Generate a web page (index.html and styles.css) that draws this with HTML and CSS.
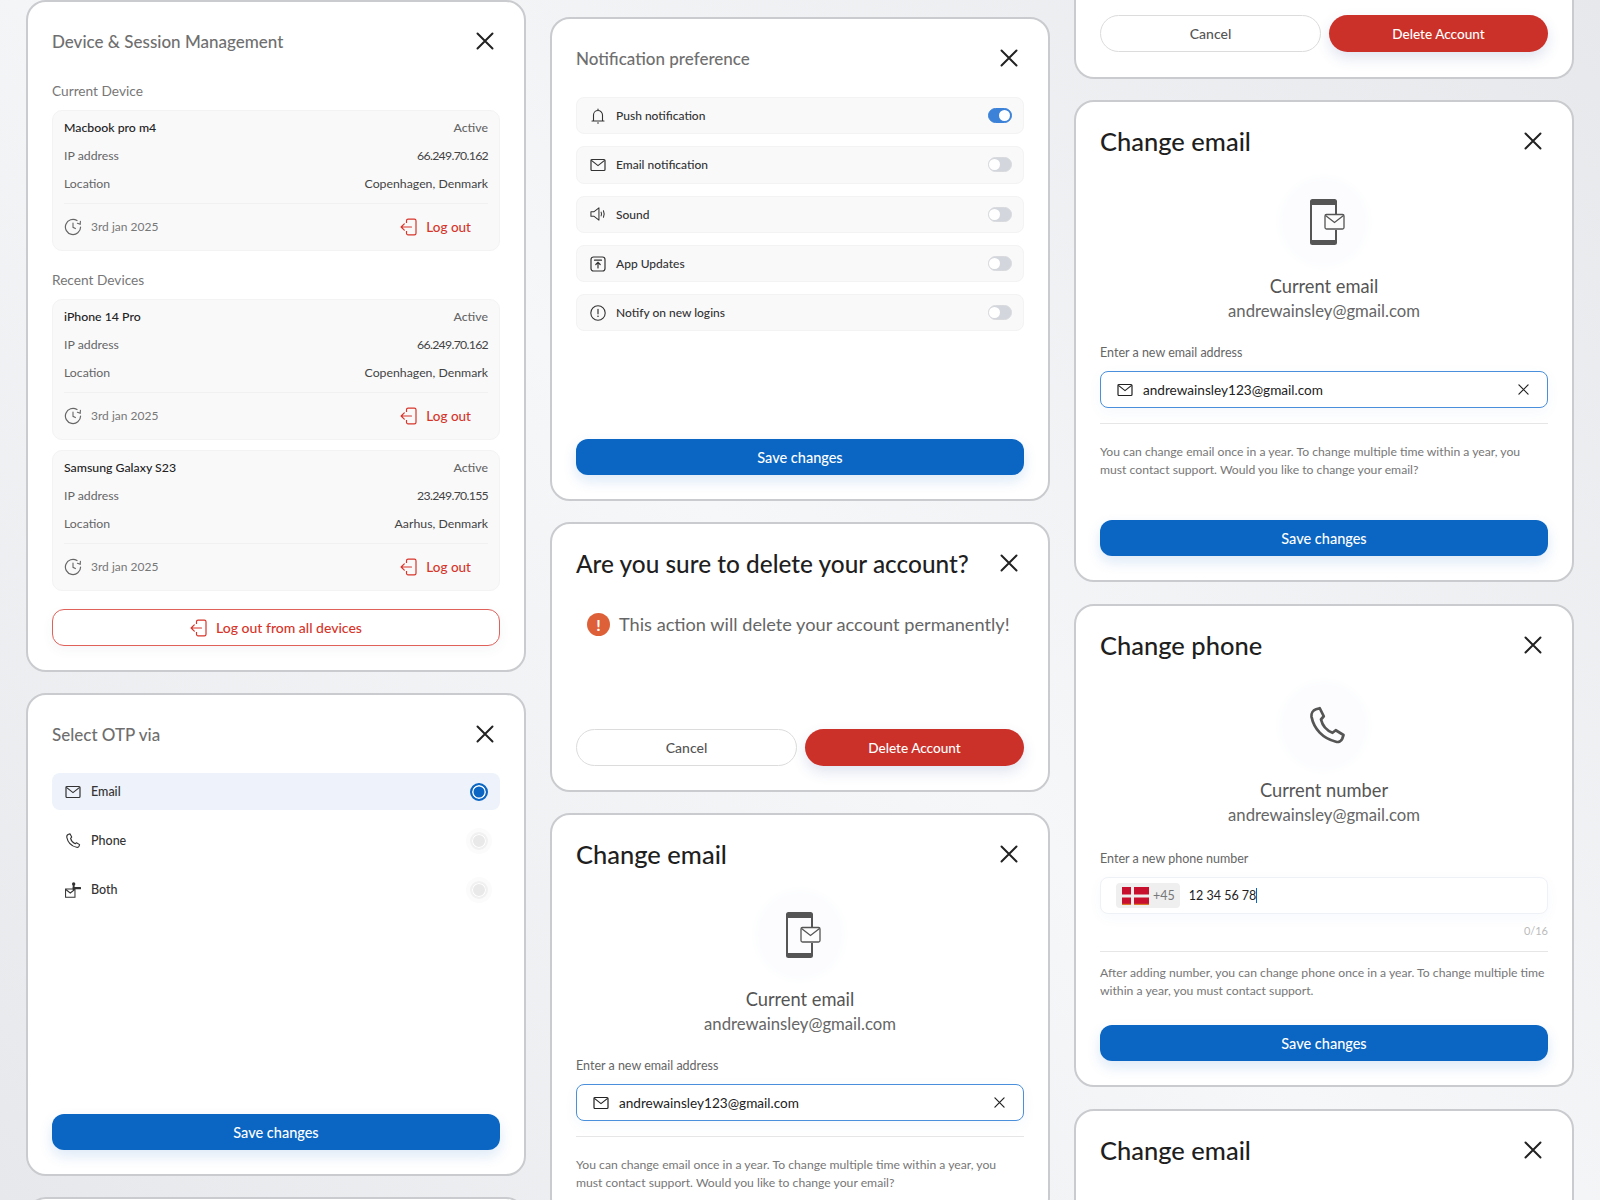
FILE: index.html
```html
<!DOCTYPE html>
<html lang="en">
<head>
    <meta charset="UTF-8">
    <title>Account settings dialogs</title>
    <link rel="stylesheet" href="styles.css">
</head>
<body>

<svg class="sprite" width="0" height="0">
    <symbol id="i-close" viewBox="0 0 18 18"><path d="M1.5 1.5l15 15M16.5 1.5l-15 15" fill="none" stroke="currentColor" stroke-width="2" stroke-linecap="round"/></symbol>
    <symbol id="i-mail" viewBox="0 0 16 14"><rect x="1" y="1.5" width="14" height="11" rx="1" fill="none" stroke="currentColor" stroke-width="1.2"/><path d="M1.4 2.4L8 7.6l6.6-5.2" fill="none" stroke="currentColor" stroke-width="1.2"/></symbol>
    <symbol id="i-phone" viewBox="0 0 16 16"><path d="M3.6 1.3l1.5-.4 1.6 3.2-1.1 1.3c.6 2.500 2.300 4.400 4.600 5.300l1.300-1 3.100 1.900-.5 1.500c-.4 1-1.500 1.500-2.500 1.200C6.300 13 2.800 9.200 1.800 4.300c-.2-1.300.6-2.600 1.800-3z" fill="none" stroke="currentColor" stroke-width="1.100" stroke-linejoin="round"/></symbol>
    <symbol id="i-both" viewBox="0 0 17 17"><path d="M.6 7.500h10v8.800H.6z" fill="none" stroke="currentColor" stroke-width="1.100"/><path d="M.8 8l4.800 3.700L10.400 8" fill="none" stroke="currentColor" stroke-width="1.100"/><circle cx="9.200" cy="2" r="1.800" fill="currentColor"/><path d="M9.200 3v5.500" stroke="currentColor" stroke-width="2"/><path d="M9.200 6.500h7" stroke="currentColor" stroke-width="2.400" stroke-linecap="round"/></symbol>
    <symbol id="i-logout" viewBox="0 0 18 18"><path d="M6.500 5V2.800c0-.9.700-1.600 1.600-1.600h6.300c.9 0 1.600.7 1.600 1.600v12.400c0 .9-.7 1.600-1.600 1.600H8.100c-.9 0-1.600-.7-1.600-1.600V13" fill="none" stroke="currentColor" stroke-width="1.200"/><path d="M11.500 9H1.200M4.300 5.800L1.100 9l3.200 3.200" fill="none" stroke="currentColor" stroke-width="1.200" stroke-linecap="round" stroke-linejoin="round"/></symbol>
    <symbol id="i-clock" viewBox="0 0 18 18"><path d="M16.600 9A7.600 7.600 0 1 1 13 2.500" fill="none" stroke="currentColor" stroke-width="1.200" stroke-linecap="round"/><path d="M9 5v4.300l2.400 1.300" fill="none" stroke="currentColor" stroke-width="1.100" stroke-linecap="round"/><path d="M16.400 3.300l-.2 3-2.800-1" fill="none" stroke="currentColor" stroke-width="1.100" stroke-linecap="round"/></symbol>
    <symbol id="i-bell" viewBox="0 0 16 16"><path d="M3.500 13V7a4.500 4.500 0 0 1 9 0v6M2 13h12M8 1v1.300" fill="none" stroke="currentColor" stroke-width="1.100" stroke-linecap="round"/><circle cx="8" cy="15" r=".8" fill="currentColor"/></symbol>
    <symbol id="i-sound" viewBox="0 0 17 16"><path d="M1 5.700h3L9.500 1.500v13L4 10.300H1z" fill="none" stroke="currentColor" stroke-width="1.100" stroke-linejoin="round"/><path d="M11.800 6c.6 1.300.6 2.700 0 4M14.300 4.500c1 2.300 1 4.700 0 7" fill="none" stroke="currentColor" stroke-width="1.100" stroke-linecap="round"/></symbol>
    <symbol id="i-update" viewBox="0 0 16 16"><rect x="1" y="1" width="14" height="14" rx="2.500" fill="none" stroke="currentColor" stroke-width="1.200"/><path d="M4.500 4.200h7M8 12V6.500M5.800 8.500L8 6.300l2.200 2.200" fill="none" stroke="currentColor" stroke-width="1.200" stroke-linecap="round"/></symbol>
    <symbol id="i-alert" viewBox="0 0 16 16"><circle cx="8" cy="8" r="7.200" fill="none" stroke="currentColor" stroke-width="1.100"/><path d="M8 4.400v4.400" stroke="currentColor" stroke-width="1.200" stroke-linecap="round"/><circle cx="8" cy="11.300" r=".8" fill="currentColor"/></symbol>
    <symbol id="i-device-mail" viewBox="0 0 36 46"><path d="M3.500 0h22A2.500 2.500 0 0 1 28 2.500V6H1V2.500A2.500 2.500 0 0 1 3.500 0zM1 41h27v2.500a2.500 2.500 0 0 1-2.500 2.500h-22A2.500 2.500 0 0 1 1 43.500z" fill="currentColor"/><path d="M2 3v40M27 6v9M27 31v10" stroke="currentColor" stroke-width="2"/><rect x="16" y="15.500" width="19" height="14.500" rx="1.500" fill="#fcfcfd" stroke="currentColor" stroke-width="1.300"/><path d="M16.500 16.500l9 7 9-7" fill="none" stroke="currentColor" stroke-width="1.300"/></symbol>
</svg>

<div class="board">

    <div class="col col-left">
        <section class="card">
            <div class="head">
                <h2 class="title-muted">Device &amp; Session Management</h2>
                <svg class="close"><use href="#i-close"/></svg>
            </div>

            <p class="group-label first">Current Device</p>
            <div class="device">
                <div class="line"><b>Macbook pro m4</b><em>Active</em></div>
                <div class="line"><span>IP address</span><i class="ip">66.249.70.162</i></div>
                <div class="line"><span>Location</span><i>Copenhagen, Denmark</i></div>
                <div class="foot">
                    <svg class="ico-clock"><use href="#i-clock"/></svg><span class="date">3rd jan 2025</span>
                    <a class="logout"><svg class="ico-logout"><use href="#i-logout"/></svg>Log out</a>
                </div>
            </div>

            <p class="group-label">Recent Devices</p>
            <div class="device">
                <div class="line"><b>iPhone 14 Pro</b><em>Active</em></div>
                <div class="line"><span>IP address</span><i class="ip">66.249.70.162</i></div>
                <div class="line"><span>Location</span><i>Copenhagen, Denmark</i></div>
                <div class="foot">
                    <svg class="ico-clock"><use href="#i-clock"/></svg><span class="date">3rd jan 2025</span>
                    <a class="logout"><svg class="ico-logout"><use href="#i-logout"/></svg>Log out</a>
                </div>
            </div>
            <div class="device next">
                <div class="line"><b>Samsung Galaxy S23</b><em>Active</em></div>
                <div class="line"><span>IP address</span><i class="ip">23.249.70.155</i></div>
                <div class="line"><span>Location</span><i>Aarhus, Denmark</i></div>
                <div class="foot">
                    <svg class="ico-clock"><use href="#i-clock"/></svg><span class="date">3rd jan 2025</span>
                    <a class="logout"><svg class="ico-logout"><use href="#i-logout"/></svg>Log out</a>
                </div>
            </div>

            <button class="btn-outline-red"><svg class="ico-logout"><use href="#i-logout"/></svg>Log out from all devices</button>
        </section>

        <section class="card tall">
            <div class="head">
                <h2 class="title-muted">Select OTP via</h2>
                <svg class="close"><use href="#i-close"/></svg>
            </div>
            <div class="options">
                <div class="option selected">
                    <svg class="ico"><use href="#i-mail"/></svg><span>Email</span><span class="radio on"></span>
                </div>
                <div class="option">
                    <svg class="ico"><use href="#i-phone"/></svg><span>Phone</span><span class="radio"></span>
                </div>
                <div class="option">
                    <svg class="ico"><use href="#i-both"/></svg><span>Both</span><span class="radio"></span>
                </div>
            </div>
            <button class="btn-save push">Save changes</button>
        </section>

        <section class="card stub"></section>
    </div>

    <div class="col col-mid">
        <section class="card tall notif">
            <div class="head">
                <h2 class="title-muted">Notification preference</h2>
                <svg class="close"><use href="#i-close"/></svg>
            </div>
            <div class="prefs">
                <div class="pref"><svg class="ico"><use href="#i-bell"/></svg><span>Push notification</span><span class="toggle on"></span></div>
                <div class="pref"><svg class="ico"><use href="#i-mail"/></svg><span>Email notification</span><span class="toggle"></span></div>
                <div class="pref"><svg class="ico"><use href="#i-sound"/></svg><span>Sound</span><span class="toggle"></span></div>
                <div class="pref"><svg class="ico"><use href="#i-update"/></svg><span>App Updates</span><span class="toggle"></span></div>
                <div class="pref"><svg class="ico"><use href="#i-alert"/></svg><span>Notify on new logins</span><span class="toggle"></span></div>
            </div>
            <button class="btn-save push">Save changes</button>
        </section>

        <section class="card card-delete">
            <div class="head">
                <h2 class="title-big title-long">Are you sure to delete your account?</h2>
                <svg class="close"><use href="#i-close"/></svg>
            </div>
            <div class="warning">
                <span class="warning-dot">!</span>
                <p>This action will delete your account permanently!</p>
            </div>
            <div class="actions push">
                <button class="btn-cancel">Cancel</button>
                <button class="btn-delete">Delete Account</button>
            </div>
        </section>

        <section class="card">
            <div class="head">
                <h2 class="title-big">Change email</h2>
                <svg class="close"><use href="#i-close"/></svg>
            </div>
            <div class="badge"><svg class="ico-device"><use href="#i-device-mail"/></svg></div>
            <p class="current">Current email</p>
            <p class="current-value">andrewainsley@gmail.com</p>
            <label class="field-label">Enter a new email address</label>
            <div class="input focus">
                <svg class="ico-mail"><use href="#i-mail"/></svg>
                <span class="input-text">andrewainsley123@gmail.com</span>
                <svg class="ico-clear"><use href="#i-close"/></svg>
            </div>
            <hr class="rule">
            <p class="note">You can change email once in a year. To change multiple time within a year, you must contact support. Would you like to change your email?</p>
        </section>
    </div>

    <div class="col">
        <section class="card cut">
            <div class="actions">
                <button class="btn-cancel">Cancel</button>
                <button class="btn-delete">Delete Account</button>
            </div>
        </section>

        <section class="card">
            <div class="head">
                <h2 class="title-big">Change email</h2>
                <svg class="close"><use href="#i-close"/></svg>
            </div>
            <div class="badge"><svg class="ico-device"><use href="#i-device-mail"/></svg></div>
            <p class="current">Current email</p>
            <p class="current-value">andrewainsley@gmail.com</p>
            <label class="field-label">Enter a new email address</label>
            <div class="input focus">
                <svg class="ico-mail"><use href="#i-mail"/></svg>
                <span class="input-text">andrewainsley123@gmail.com</span>
                <svg class="ico-clear"><use href="#i-close"/></svg>
            </div>
            <hr class="rule">
            <p class="note">You can change email once in a year. To change multiple time within a year, you must contact support. Would you like to change your email?</p>
            <button class="btn-save save-email">Save changes</button>
        </section>

        <section class="card">
            <div class="head">
                <h2 class="title-big">Change phone</h2>
                <svg class="close"><use href="#i-close"/></svg>
            </div>
            <div class="badge"><svg class="ico-handset"><use href="#i-phone"/></svg></div>
            <p class="current">Current number</p>
            <p class="current-value">andrewainsley@gmail.com</p>
            <label class="field-label phone-label">Enter a new phone number</label>
            <div class="input phone">
                <span class="dial">
                    <svg class="flag" viewBox="0 0 27 18"><rect width="27" height="18" fill="#c8102e"/><rect y="16.800" width="27" height="1.200" fill="#d9792a"/><rect x="9" width="3" height="18" fill="#eeeeee"/><rect y="7.500" width="27" height="3" fill="#eeeeee"/></svg>
                    <span class="dial-code">+45</span>
                </span>
                <span class="input-text phone-number">12 34 56 78</span><span class="caret"></span>
            </div>
            <p class="counter">0/16</p>
            <hr class="rule rule-phone">
            <p class="note note-phone">After adding number, you can change phone once in a year. To change multiple time within a year, you must contact support.</p>
            <button class="btn-save save-phone">Save changes</button>
        </section>

        <section class="card stub">
            <div class="head">
                <h2 class="title-big">Change email</h2>
                <svg class="close"><use href="#i-close"/></svg>
            </div>
        </section>
    </div>

</div>

</body>
</html>
```

FILE: styles.css
```css
* {
    box-sizing: border-box;
}
html, body {
    margin: 0;
    height: 1200px;
    overflow: hidden;
}
body {
    font-family: Lato, "Noto Sans", sans-serif;
    color: #222;
    background: linear-gradient(45deg, #e6e8eb 0%, #f6f7f9 50%, #e6e8eb 100%);
}
h2, p {
    margin: 0;
    font-weight: 400;
}
i, em {
    font-style: normal;
}
button {
    font-family: inherit;
    cursor: pointer;
}
.sprite {
    position: absolute;
}

.board {
    display: flex;
    gap: 24px;
    padding-left: 26px;
    height: 1200px;
    overflow: hidden;
}
.col {
    width: 500px;
    flex: none;
    display: flex;
    flex-direction: column;
    gap: 22px;
}
.col-left {
    gap: 21px;
}
.col-mid {
    gap: 21px;
    padding-top: 17px;
}

.card {
    flex: none;
    display: flex;
    flex-direction: column;
    padding: 0 24px 24px;
    background: #fff;
    border: 2px solid #c9cbce;
    border-radius: 20px;
}
.card.tall {
    height: 483px;
}
.card.notif {
    height: 484px;
}
.card.cut {
    height: 79px;
    margin-bottom: -1px;
    padding-top: 15px;
    border-top: none;
    border-radius: 0 0 20px 20px;
}
.card.stub {
    height: 200px;
}
.card-delete {
    height: 270px;
}
.push {
    margin-top: auto;
}

.head {
    display: flex;
    align-items: center;
    justify-content: space-between;
    height: 28px;
    margin-top: 25px;
    flex: none;
}
.title-muted {
    font-size: 17px;
    font-weight: 500;
    color: #6f6f6f;
}
.title-big {
    font-size: 25.5px;
    font-weight: 500;
    color: #1f1f1f;
    white-space: nowrap;
}
.title-long {
    font-size: 24.4px;
}
.close {
    width: 18px;
    height: 18px;
    margin-right: 6px;
    color: #222;
    flex: none;
}

/* device list */
.group-label {
    height: 18px;
    margin: 20px 0 10px;
    font-size: 13.700px;
    line-height: 18px;
    color: #777;
}
.group-label.first {
    margin-top: 27px;
}
.device {
    height: 141px;
    padding: 7px 11px 11px;
    background: #f9f9fa;
    border: 1px solid #f3f3f4;
    border-radius: 10px;
}
.device.next {
    margin-top: 10px;
}
.line {
    display: flex;
    justify-content: space-between;
    height: 20px;
    margin-bottom: 8px;
    font-size: 12.300px;
    line-height: 20px;
    color: #666;
}
.line b {
    font-weight: 500;
    color: #222;
}
.line em {
    font-weight: 500;
    color: #666;
}
.line i {
    color: #444;
}
.line .ip {
    letter-spacing: -0.7px;
}
.foot {
    display: flex;
    align-items: center;
    height: 36px;
    margin-top: 9px;
    padding-top: 10px;
    border-top: 1px solid #f1f1f2;
    font-size: 12px;
    color: #777;
}
.ico-clock {
    width: 18px;
    height: 18px;
    margin-right: 9px;
    color: #666;
}
.logout {
    display: flex;
    align-items: center;
    gap: 8px;
    margin-left: auto;
    margin-right: 17px;
    font-size: 13.500px;
    font-weight: 500;
    color: #d6352a;
}
.ico-logout {
    width: 18px;
    height: 18px;
}
.btn-outline-red {
    display: flex;
    align-items: center;
    justify-content: center;
    gap: 8px;
    height: 37px;
    margin-top: 18px;
    background: #fff;
    border: 1px solid #e0605a;
    border-radius: 12px;
    font-size: 14px;
    font-weight: 500;
    color: #d6352a;
    box-shadow: 0 4px 12px rgba(60, 80, 120, 0.05);
}

/* otp options */
.options {
    display: flex;
    flex-direction: column;
    gap: 12px;
    margin-top: 25px;
}
.option {
    display: flex;
    align-items: center;
    height: 37px;
    padding: 0 12px 0 13px;
    border-radius: 8px;
    font-size: 12.500px;
    font-weight: 500;
    color: #333;
}
.option.selected {
    background: #edf2fb;
}
.ico {
    width: 16px;
    height: 16px;
    margin-right: 10px;
    color: #333;
    flex: none;
}
.radio {
    width: 18px;
    height: 18px;
    margin-left: auto;
    border: 2px solid #f1f1f2;
    border-radius: 50%;
    background: #e9e9ea;
    box-shadow: inset 0 0 0 1px #fff, 0 0 0 4px #fbfbfc;
}
.radio.on {
    border-color: #0b66c3;
    background: #0b66c3;
    box-shadow: inset 0 0 0 1.5px #fff;
}

/* notification rows */
.prefs {
    display: flex;
    flex-direction: column;
    gap: 12px;
    margin-top: 25px;
}
.pref {
    display: flex;
    align-items: center;
    height: 37.3px;
    padding: 0 11px 0 13px;
    background: #f9f9fa;
    border: 1px solid #f3f3f4;
    border-radius: 8px;
    font-size: 12px;
    font-weight: 500;
    color: #333;
}
.toggle {
    position: relative;
    width: 24px;
    height: 15px;
    margin-left: auto;
    border-radius: 8px;
    background: #d3d7dd;
    border: 1px solid #d8dadd;
}
.toggle::after {
    content: "";
    position: absolute;
    top: 1px;
    left: 0;
    width: 11px;
    height: 11px;
    border-radius: 50%;
    background: #fff;
}
.toggle.on {
    background: #3b82d8;
    border-color: #3b82d8;
}
.toggle.on::after {
    left: auto;
    right: 1px;
}

/* buttons */
.btn-save {
    flex: none;
    height: 36px;
    background: #0b66c3;
    border: none;
    border-radius: 12px;
    font-size: 14.500px;
    font-weight: 500;
    color: #fff;
    box-shadow: 0 6px 14px rgba(11, 102, 195, 0.14);
}
.save-email {
    margin-top: 41px;
}
.save-phone {
    margin-top: 25px;
}
.actions {
    display: flex;
    gap: 8px;
}
.btn-cancel, .btn-delete {
    flex: 1;
    height: 37px;
    border-radius: 19px;
    font-size: 14px;
    font-weight: 500;
}
.btn-cancel {
    background: #fff;
    border: 1px solid #dcdcdc;
    color: #555;
}
.btn-delete {
    font-size: 13.600px;
    background: #cb3129;
    border: none;
    color: #fff;
    box-shadow: 0 6px 14px rgba(60, 90, 160, 0.16);
}

/* delete dialog */
.warning {
    display: flex;
    align-items: center;
    gap: 9px;
    height: 24px;
    margin: 35px 0 0 11px;
}
.warning p {
    font-size: 18.200px;
    color: #666;
    white-space: nowrap;
}
.warning-dot {
    flex: none;
    width: 23px;
    height: 23px;
    border-radius: 50%;
    background: #dd6038;
    font-size: 16px;
    font-weight: 700;
    line-height: 23px;
    text-align: center;
    color: #fff;
}

/* change email / phone */
.badge {
    display: flex;
    align-items: center;
    justify-content: center;
    align-self: center;
    width: 82px;
    height: 82px;
    margin-top: 26px;
    border-radius: 50%;
    background: #fcfcfe;
    box-shadow: 0 0 10px 4px #fbfcfe;
    flex: none;
}
.ico-device {
    width: 36px;
    height: 46px;
    margin-left: 6px;
    color: #555;
}
.ico-handset {
    width: 40px;
    height: 40px;
    margin-left: 6px;
    color: #555;
}
.current {
    height: 24px;
    margin-top: 11px;
    font-size: 18.300px;
    line-height: 24px;
    text-align: center;
    color: #555;
}
.current-value {
    height: 24px;
    margin-top: 1px;
    font-size: 16.700px;
    line-height: 24px;
    text-align: center;
    color: #666;
}
.field-label {
    height: 18px;
    margin: 21px 0 9px;
    font-size: 12.500px;
    line-height: 18px;
    color: #666;
}
.field-label.phone-label {
    margin-top: 23px;
}
.input {
    display: flex;
    align-items: center;
    flex: none;
    height: 37px;
    padding: 0 16px;
    border: 1px solid #eef1f6;
    border-radius: 8px;
    background: #fff;
}
.input.focus {
    border-color: #4a8fdb;
    box-shadow: 0 4px 14px rgba(60, 110, 200, 0.05);
}
.ico-mail {
    width: 16px;
    height: 14px;
    margin-right: 10px;
    color: #222;
}
.ico-clear {
    width: 11px;
    height: 11px;
    margin-left: auto;
    margin-right: 2px;
    color: #222;
}
.input-text {
    font-size: 13.600px;
    color: #222;
}
.input-text.phone-number {
    font-size: 12.500px;
}
.input.phone {
    padding: 0 15px;
    box-shadow: 0 4px 14px rgba(60, 110, 200, 0.04);
}
.dial {
    display: flex;
    align-items: center;
    gap: 4px;
    height: 25px;
    margin-right: 9px;
    padding: 0 5px 0 6px;
    border-radius: 4px;
    background: #efefef;
}
.flag {
    width: 27px;
    height: 18px;
}
.dial-code {
    font-size: 12.500px;
    color: #777;
}
.caret {
    width: 1px;
    height: 15px;
    background: #0b66c3;
}
.rule {
    width: 100%;
    height: 1px;
    margin: 15px 0 0;
    border: none;
    background: #e6e6e7;
    flex: none;
}
.rule-phone {
    margin-top: 11px;
}
.note {
    margin-top: 19px;
    font-size: 12.200px;
    line-height: 18px;
    color: #777;
}
.note-phone {
    margin-top: 12px;
}
.counter {
    height: 18px;
    margin-top: 8px;
    font-size: 11px;
    line-height: 18px;
    text-align: right;
    color: #bbb;
}
```
